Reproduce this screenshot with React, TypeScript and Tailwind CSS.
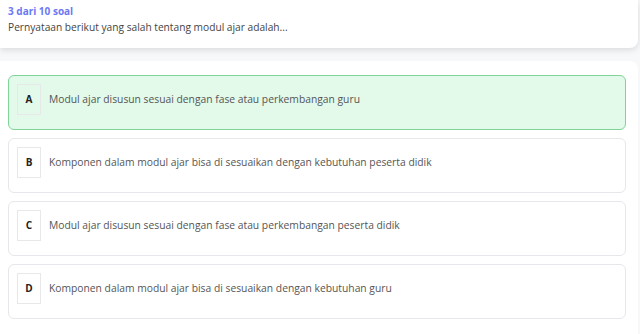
const options = [
  { key: 'A', text: 'Modul ajar disusun sesuai dengan fase atau perkembangan guru', active: true },
  { key: 'B', text: 'Komponen dalam modul ajar bisa di sesuaikan dengan kebutuhan peserta didik', active: false },
  { key: 'C', text: 'Modul ajar disusun sesuai dengan fase atau perkembangan peserta didik', active: false },
  { key: 'D', text: 'Komponen dalam modul ajar bisa di sesuaikan dengan kebutuhan guru', active: false },
];

export default function App() {
  return (
    <div
      className="w-[640px] h-[334px] overflow-hidden bg-[#f7f8fa]"
      style={{ fontFamily: '"Open Sans", "Noto Sans", sans-serif' }}
    >
      <div className="w-[638px] h-[48px] bg-white rounded-br-lg shadow-[0_2px_6px_rgba(0,0,0,0.12)] px-2 pt-[4px]">
        <p className="text-[10px] font-bold text-[#6b78f5] leading-[14px]">3 dari 10 soal</p>
        <p className="mt-[2px] text-[10.2px] text-[#444] leading-[14px]">
          Pernyataan berikut yang salah tentang modul ajar adalah...
        </p>
      </div>

      <div className="mt-[13px] w-[638px] h-[280px] bg-white rounded-tr-lg pl-2 pr-3 pt-[14px] flex flex-col gap-2">
        {options.map((o) => (
          <div
            key={o.key}
            className={
              o.active
                ? 'h-[55px] flex items-start gap-2 rounded-md border border-[#80d49a] bg-[#e3f9ea] pl-[8px] pt-[8px]'
                : 'h-[55px] flex items-start gap-2 rounded-md border border-[#e6e7ea] bg-white pl-[8px] pt-[8px]'
            }
          >
            <div className="w-[24px] h-[31px] shrink-0 flex items-center justify-center border border-[#e6e8ea] text-[10px] font-bold text-[#222]">
              {o.key}
            </div>
            <p className="h-[31px] flex items-center text-[10.3px] text-[#555]">{o.text}</p>
          </div>
        ))}
      </div>
    </div>
  );
}
